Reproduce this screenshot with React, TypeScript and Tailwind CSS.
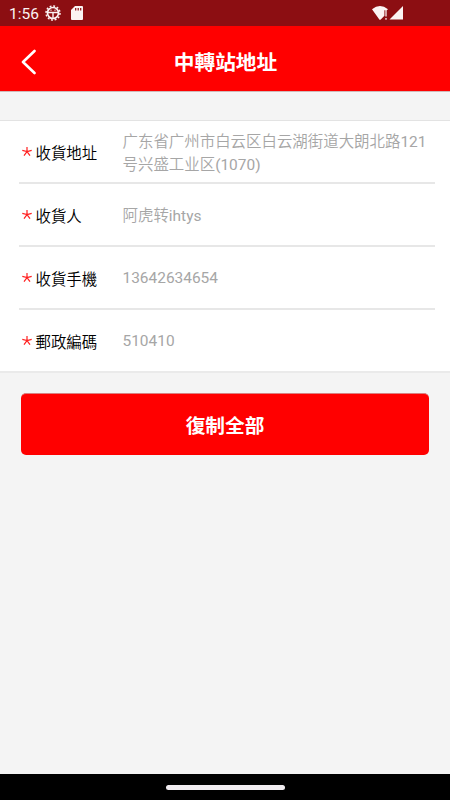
import React from 'react'
import clsx from 'clsx'

const fields = [
  { label: '收貨地址', value: '广东省广州市白云区白云湖街道大朗北路121号兴盛工业区(1070)' },
  { label: '收貨人', value: '阿虎转ihtys' },
  { label: '收貨手機', value: '13642634654' },
  { label: '郵政編碼', value: '510410' },
]

function StatusBar() {
  return (
    <div className="h-[26px] shrink-0 bg-[#8c0e12] flex items-center pl-[9px] pr-[46px] text-[#fbf3f3]">
      <span className="text-[15.5px] leading-none pt-[3px] w-[36px]">1:56</span>
      {/* Gear */}
      <svg width="16" height="16" viewBox="0 0 16 16" fill="none" stroke="currentColor">
        <circle cx="8" cy="8" r="5.5" strokeWidth="1.7" />
        <circle cx="8" cy="8" r="7" strokeWidth="1.5" strokeDasharray="1.9 1.765" />
        <path d="M3 7.5H13M8 8V13" strokeWidth="1.4" />
        <path d="M5.3 5.2h1.4M9.3 5.2h1.4" strokeWidth="1" />
      </svg>
      {/* SD card */}
      <svg width="12" height="14" viewBox="0 0 12 14" className="ml-[10px]">
        <path d="M4 0H11Q12 0 12 1V13Q12 14 11 14H1Q0 14 0 13V4Z" fill="currentColor" />
        <path d="M4.7 2V4.5M7.2 2V4.5M9.7 2V4.5" stroke="#8c0e12" strokeWidth="1.2" />
      </svg>
      <svg width="32" height="14" viewBox="0 0 32 14" className="ml-auto">
        <path d="M0 3.2Q8 -3.2 16 3.2L14.8 4.3H12.4V9.8L8.5 13.7H7.5Z" fill="currentColor" />
        <path d="M14 4V10.5M14 12V13.8" stroke="currentColor" strokeWidth="1.6" opacity=".8" />
        <path d="M31 0V13.5H17.5Z" fill="currentColor" />
      </svg>
    </div>
  )
}

function Header() {
  return (
    <div className="h-[66px] shrink-0 bg-[#ff0000] border-b border-[#d0b8b8] grid grid-cols-[60px_1fr_60px] items-center pt-[6px] text-white">
      <svg width="15" height="26" viewBox="0 0 15 26" fill="none" className="ml-[21px]">
        <path d="M13.5 2L2 13L13.5 24" stroke="currentColor" strokeWidth="2.6" strokeLinecap="round" strokeLinejoin="round" />
      </svg>
      <h1 className="text-center text-[20.7px] leading-[30px] pt-[3px] pl-px font-bold">中轉站地址</h1>
    </div>
  )
}

// Latin runs are set in regular weight, the Chinese around them a little lighter
function MixedText({ text }: { text: string }) {
  return (
    <>
      {text.split(/([\x20-\x7e]+)/).map((part, i) => (
        <span key={i} className={i % 2 ? 'font-normal' : 'font-[350]'}>{part}</span>
      ))}
    </>
  )
}

function Field({ label, value, last }: { label: string; value: string; last: boolean }) {
  const numeric = /^\d+$/.test(value)
  return (
    <div className={clsx('ml-[19px] mr-[15px] flex items-center', last ? 'h-[61px]' : 'h-[63px] border-b-2 border-[#e7e7e7]')}>
      <svg width="10" height="10" viewBox="0 0 10 10" className="ml-[2.5px] mr-[4px] shrink-0">
        <path d="M5 0V4.6L.3 3.4M5 4.6L9.7 3.4M5 4.6L2 8.7M5 4.6L8 8.7" fill="none" stroke="#ff2020" strokeWidth="1.2" />
      </svg>
      <span className="w-[87px] shrink-0 pt-[4px] text-[15.4px] leading-[22px] font-[350] text-black">{label}</span>
      <span className={clsx('flex-1 text-[15.45px] leading-[22.5px] text-[#a6a6a6] break-all', numeric ? 'pt-[2px]' : 'pt-[4px]')}>
        <MixedText text={value} />
      </span>
    </div>
  )
}

export default function App() {
  return (
    <div className="w-[450px] h-[800px] flex flex-col overflow-hidden bg-[#f4f4f4] font-[Roboto,'Noto_Sans_CJK_SC',sans-serif]">
      <StatusBar />
      <Header />

      <div className="mt-[28px] bg-white border-t border-b-2 border-t-[#e3e3e3] border-b-[#eaeaea]">
        {fields.map((field, i) => (
          <Field key={field.label} {...field} last={i === fields.length - 1} />
        ))}
      </div>

      <button className="mx-[21px] mt-[20px] h-[62px] shrink-0 rounded-[5px] bg-[#ff0000] border-t border-[#d98080] pt-[4px] text-white text-[19.7px] font-bold">
        復制全部
      </button>

      {/* Gesture bar */}
      <div className="mt-auto h-[26px] shrink-0 bg-black flex items-center justify-center">
        <div className="w-[119px] h-[5px] rounded-full bg-[#f0ecf0]" />
      </div>
    </div>
  )
}
